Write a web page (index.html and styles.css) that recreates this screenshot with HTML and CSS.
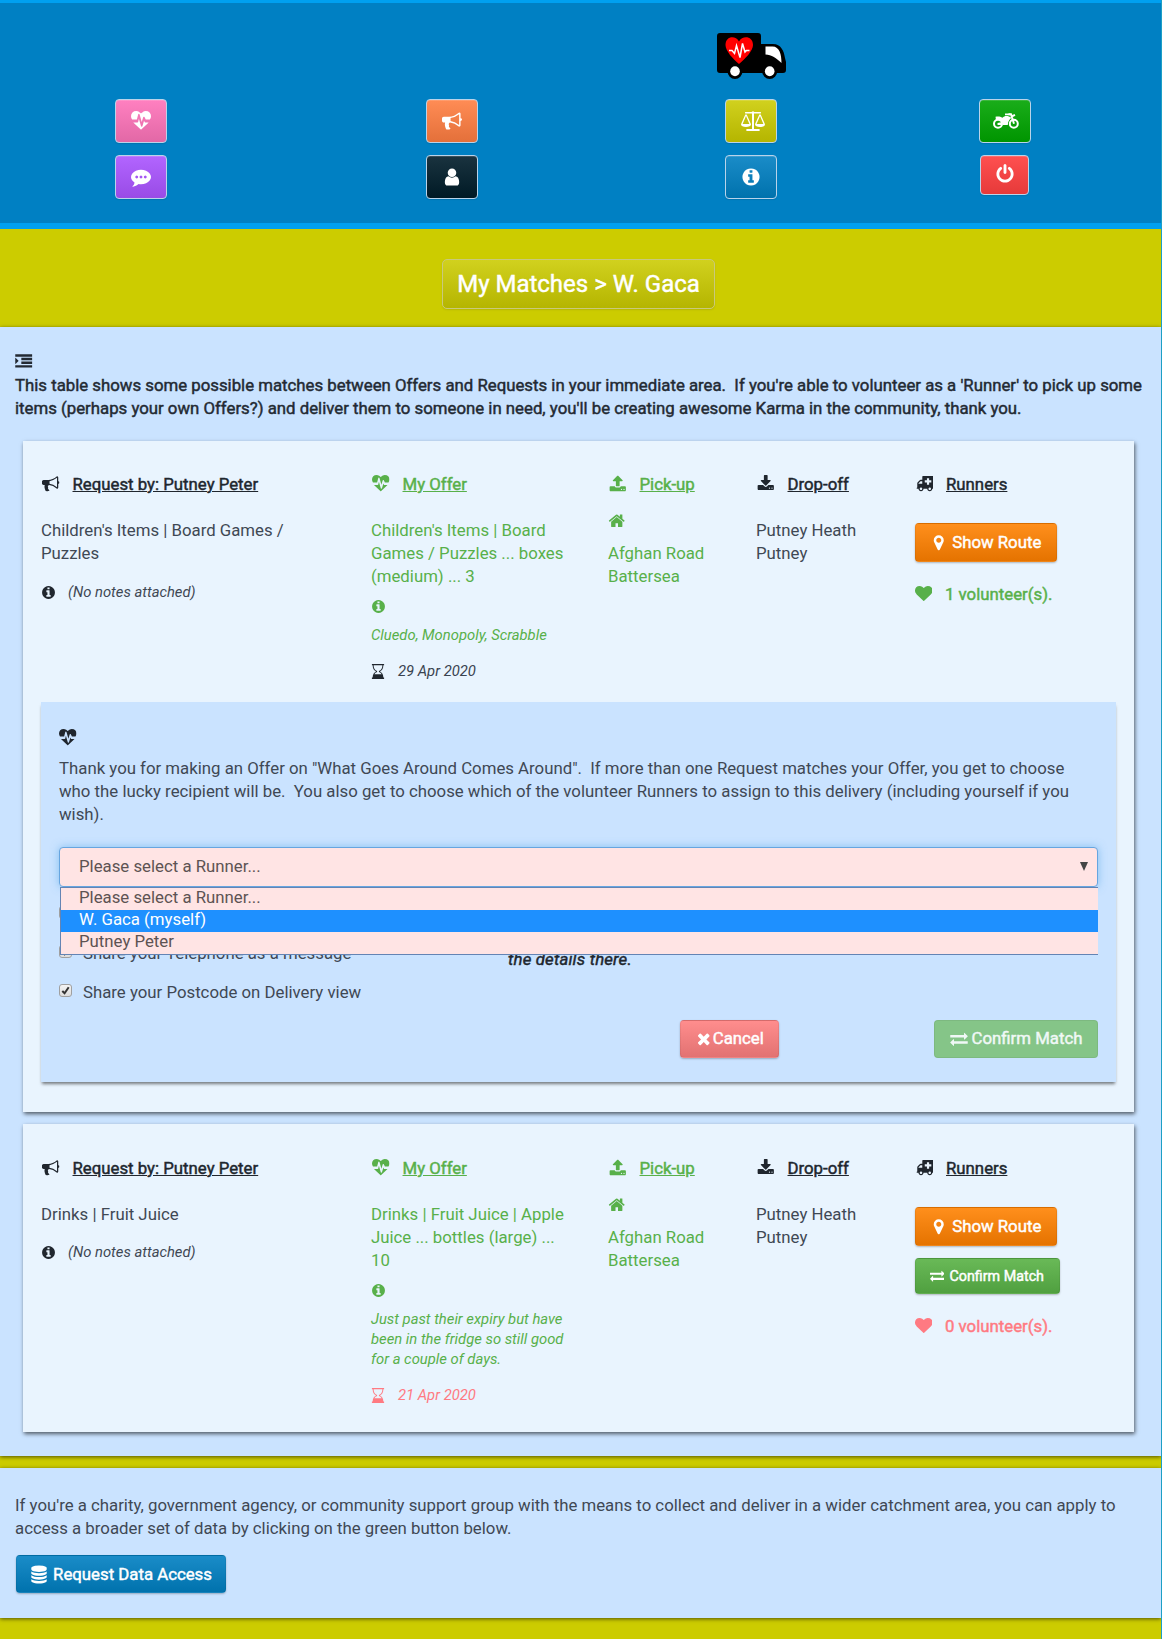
FILE: index.html
```html
<!DOCTYPE html>
<html lang="en">
<head>
<meta charset="utf-8">
<title>My Matches</title>
<link rel="stylesheet" href="styles.css">
</head>
<body>
<svg class="sprite" aria-hidden="true">
  <symbol id="heart" viewBox="0 0 1792 1792"><path d="M896 1664q-26 0-44-18l-624-602q-10-8-27.500-26t-55.500-65.500-68-97.500-53.500-121-23.500-138q0-220 127-344t351-124q62 0 126.500 21.500t120 58 95.500 68.500 76 68q36-36 76-68t95.500-68.500 120-58 126.500-21.500q224 0 351 124t127 344q0 221-229 450l-623 600q-18 18-44 18z"/></symbol>
  <symbol id="heartbeat" viewBox="0 0 1792 1792"><path d="M1280 1024h305q-5 6-10 10.500t-9 7.500l-3 4-623 600q-18 18-44 18t-44-18l-624-602q-5-2-21-20h369q22 0 39.500-13.500t22.500-34.500l70-281 190 667q6 20 23 33t39 13q21 0 38-13t23-33l146-485 56 112q18 35 57 35zm512-556q0 145-103 300h-369l-111-221q-8-17-25.500-27t-36.500-8q-45 5-56 46l-129 430-196-686q-6-20-23.500-33t-39.500-13-39 13.500-22 34.500l-116 464h-423q-103-155-103-300 0-220 127-344t351-124q62 0 126.500 21.500t120 58 95.500 68.500 76 68q36-36 76-68t95.500-68.500 120-58 126.500-21.500q224 0 351 124t127 344z"/></symbol>
  <symbol id="info" viewBox="0 0 1792 1792"><path d="M1152 1376v-160q0-14-9-23t-23-9h-96v-512q0-14-9-23t-23-9h-320q-14 0-23 9t-9 23v160q0 14 9 23t23 9h96v320h-96q-14 0-23 9t-9 23v160q0 14 9 23t23 9h448q14 0 23-9t9-23zm-128-896v-160q0-14-9-23t-23-9h-192q-14 0-23 9t-9 23v160q0 14 9 23t23 9h192q14 0 23-9t9-23zm640 416q0 209-103 385.500t-279.500 279.500-385.500 103-385.500-103-279.500-279.500-103-385.500 103-385.500 279.500-279.500 385.500-103 385.500 103 279.500 279.500 103 385.500z"/></symbol>
  <symbol id="bullhorn" viewBox="0 0 1792 1792"><path d="M1664 640q53 0 90.500 37.500t37.500 90.500-37.500 90.500-90.500 37.500v384q0 52-38 90t-90 38q-417-347-812-380-58 19-91 66t-31 100.500 40 92.500q-20 33-23 65.500t6 58 33.500 55 48 50 61.500 50.500q-29 58-111.500 83t-168.500 11.500-132-55.500q-7-23-29.500-87.500t-32-94.500-23-89-15-101 3.500-98.500 22-110.500h-122q-66 0-113-47t-47-113v-192q0-66 47-113t113-47h480q435 0 896-384 52 0 90 38t38 90v384zm-128 604v-954q-394 302-768 343v270q377 42 768 341z"/></symbol>
  <symbol id="marker" viewBox="0 0 1792 1792"><path d="M1152 640q0-106-75-181t-181-75-181 75-75 181 75 181 181 75 181-75 75-181zm256 0q0 109-33 179l-364 774q-16 33-47.500 52t-67.500 19-67.500-19-46.500-52l-365-774q-33-70-33-179 0-212 150-362t362-150 362 150 150 362z"/></symbol>
  <symbol id="exchange" viewBox="0 0 1792 1792"><path d="M1792 1184v192q0 13-9.500 22.500t-22.500 9.500h-1376v192q0 13-9.500 22.500t-22.500 9.500q-12 0-24-10l-319-320q-9-9-9-22 0-14 9-23l320-320q9-9 23-9 13 0 22.500 9.500t9.500 22.500v192h1376q13 0 22.500 9.500t9.500 22.500zm0-544q0 14-9 23l-320 320q-9 9-23 9-13 0-22.500-9.500t-9.500-22.500v-192h-1376q-13 0-22.500-9.500t-9.500-22.500v-192q0-13 9.500-22.500t22.500-9.500h1376v-192q0-14 9-23t23-9q12 0 24 10l319 319q9 9 9 23z"/></symbol>
  <symbol id="times" viewBox="0 0 1792 1792"><path d="M1490 1322q0 40-28 68l-136 136q-28 28-68 28t-68-28l-294-294-294 294q-28 28-68 28t-68-28l-136-136q-28-28-28-68t28-68l294-294-294-294q-28-28-28-68t28-68l136-136q28-28 68-28t68 28l294 294 294-294q28-28 68-28t68 28l136 136q28 28 28 68t-28 68l-294 294 294 294q28 28 28 68z"/></symbol>
  <symbol id="power" viewBox="0 0 1792 1792"><path d="M1664 896q0 156-61 298t-164 245-245 164-298 61-298-61-245-164-164-245-61-298q0-182 80.500-343t226.500-270q43-32 95.500-25t83.500 50q32 42 24.500 94.500t-49.500 84.500q-98 74-151.500 181t-53.500 228q0 104 40.500 198.500t109.500 163.500 163.500 109.500 198.500 40.500 198.500-40.500 163.500-109.500 109.500-163.500 40.500-198.500q0-121-53.500-228t-151.500-181q-42-32-49.500-84.500t24.500-94.500q31-43 84-50t95 25q146 109 226.500 270t80.500 343zm-640-768v640q0 52-38 90t-90 38-90-38-38-90v-640q0-52 38-90t90-38 90 38 38 90z"/></symbol>
  <symbol id="home" viewBox="0 0 1792 1792"><path d="M1472 992v480q0 26-19 45t-45 19h-384v-384h-256v384h-384q-26 0-45-19t-19-45v-480q0-1 .5-3t.5-3l575-474 575 474q1 2 1 6zm223-69l-62 74q-8 9-21 11h-3q-13 0-21-7l-692-577-692 577q-12 8-24 7-13-2-21-11l-62-74q-8-10-7-23.500t11-21.500l719-599q32-26 76-26t76 26l244 204v-195q0-14 9-23t23-9h192q14 0 23 9t9 23v408l219 182q10 8 11 21.500t-7 23.500z"/></symbol>
  <symbol id="download" viewBox="0 0 1792 1792"><path d="M1344 1344q0-26-19-45t-45-19-45 19-19 45 19 45 45 19 45-19 19-45zm256 0q0-26-19-45t-45-19-45 19-19 45 19 45 45 19 45-19 19-45zm128-224v320q0 40-28 68t-68 28h-1472q-40 0-68-28t-28-68v-320q0-40 28-68t68-28h465l135 136q58 56 136 56t136-56l136-136h464q40 0 68 28t28 68zm-325-569q17 41-14 70l-448 448q-18 19-45 19t-45-19l-448-448q-31-29-14-70 17-39 59-39h256v-448q0-26 19-45t45-19h256q26 0 45 19t19 45v448h256q42 0 59 39z"/></symbol>
  <symbol id="upload" viewBox="0 0 1792 1792"><path d="M1344 1472q0-26-19-45t-45-19-45 19-19 45 19 45 45 19 45-19 19-45zm256 0q0-26-19-45t-45-19-45 19-19 45 19 45 45 19 45-19 19-45zm128-224v320q0 40-28 68t-68 28h-1472q-40 0-68-28t-28-68v-320q0-40 28-68t68-28h427q21 56 70.500 92t110.500 36h256q61 0 110.500-36t70.500-92h427q40 0 68 28t28 68zm-325-648q-17 40-59 40h-256v448q0 26-19 45t-45 19h-256q-26 0-45-19t-19-45v-448h-256q-42 0-59-40-17-39 14-69l448-448q18-19 45-19t45 19l448 448q31 30 14 69z"/></symbol>
  <symbol id="indent" viewBox="0 0 1792 1792"><path d="M352 832q0 14-9 23l-288 288q-9 9-23 9-13 0-22.500-9.500t-9.500-22.500v-576q0-13 9.500-22.500t22.500-9.500q14 0 23 9l288 288q9 9 9 23zM0 1280h1792v256H0zM640 896h1152v256H640zM640 512h1152v256H640zM0 128h1792v256H0z"/></symbol>
  <symbol id="ambulance" viewBox="0 0 1792 1792"><path fill-rule="evenodd" d="M640 1408q0-52-38-90t-90-38-90 38-38 90 38 90 90 38 90-38 38-90zm-512-512h512v-256h-158q-13 0-22 9l-195 195q-9 9-9 22v30zm1408 512q0-52-38-90t-90-38-90 38-38 90 38 90 90 38 90-38 38-90zm256-1216v1152q0 15-4 26.500t-13.500 18.500-16.500 11.500-23.500 6-22.500 2-25.500 0-22.500-.5q0 106-75 181t-181 75-181-75-75-181h-384q0 106-75 181t-181 75-181-75-75-181h-64q-3 0-22.500.5t-25.500 0-22.500-2-23.500-6-16.500-11.500-13.500-18.500-4-26.500q0-26 19-45t45-19v-416q0-40 14-76t36-58l198-198q19-19 50.500-32t58.500-13h160v-320q0-26 19-45t45-19h1152q26 0 45 19t19 45zM1120 320v224H896v224h224v224h224V768h224V544h-224V320z"/></symbol>
  <symbol id="database" viewBox="0 0 1792 1792"><path d="M896 768q237 0 443-43t325-127v170q0 69-103 128t-280 93.500-385 34.500-385-34.500-280-93.500-103-128v-170q119 84 325 127t443 43zm0 768q237 0 443-43t325-127v170q0 69-103 128t-280 93.500-385 34.500-385-34.500-280-93.500-103-128v-170q119 84 325 127t443 43zm0-384q237 0 443-43t325-127v170q0 69-103 128t-280 93.500-385 34.500-385-34.500-280-93.500-103-128v-170q119 84 325 127t443 43zm0-1152q208 0 385 34.500t280 93.500 103 128v128q0 69-103 128t-280 93.500-385 34.500-385-34.500-280-93.500-103-128v-128q0-69 103-128t280-93.500 385-34.500z"/></symbol>
  <symbol id="user" viewBox="0 0 1792 1792"><path d="M1536 1399q0 109-62.500 187t-150.500 78h-854q-88 0-150.500-78t-62.500-187q0-85 8.500-160.500t31.500-152 58.500-131 94-89 134.500-34.500q131 128 313 128t313-128q76 0 134.500 34.500t94 89 58.500 131 31.500 152 8.500 160.500zm-256-887q0 159-112.500 271.500t-271.500 112.500-271.500-112.500-112.500-271.500 112.500-271.500 271.500-112.500 271.500 112.500 112.500 271.500z"/></symbol>
  <symbol id="comment" viewBox="0 0 1792 1792"><path d="M640 896q0-53-37.500-90.500t-90.500-37.500-90.500 37.500-37.500 90.500 37.500 90.500 90.500 37.500 90.500-37.500 37.500-90.500zm384 0q0-53-37.500-90.500t-90.500-37.500-90.500 37.500-37.500 90.500 37.500 90.500 90.500 37.500 90.500-37.500 37.500-90.500zm384 0q0-53-37.500-90.500t-90.500-37.500-90.500 37.500-37.500 90.500 37.500 90.500 90.500 37.500 90.500-37.500 37.500-90.500zm384 0q0 174-120 321.500t-326 233-450 85.500q-110 0-211-18-173 173-435 229-52 10-86 13-12 1-22-6t-13-18q-4-15 20-37 5-5 23.500-21.500t25.500-23.500 23.500-25.500 24-31.500 20.500-37 20-48 14.500-57.500 12.500-72.500q-146-90-229.500-216.500t-83.500-269.500q0-174 120-321.500t326-233 450-85.500 450 85.500 326 233 120 321.500z"/></symbol>
  <symbol id="hourglass" viewBox="0 0 14 16"><path fill-rule="evenodd" d="M.5 0h13v1.200h-.8c0 3.400-1.400 5.600-3.600 6.800 2.200 1.200 3.600 3.400 3.600 6.400h.8V16H.5v-1.600h.8C1.300 11.400 2.700 9.200 4.900 8 2.700 6.800 1.300 4.600 1.300 1.200H.5zM2.300 1.200C2.400 4.600 3.700 6.600 6 7.400v1.200c-1.300.5-2.200 1.200-2.900 2.200h7.800c-.7-1-1.600-1.700-2.900-2.200V7.400c2.300-.8 3.600-2.800 3.700-6.200z"/></symbol>
  <symbol id="scale" viewBox="0 0 24 20"><path fill-rule="evenodd" d="M11 2.600V18H6c-1 0-1 2 0 2h12c1 0 1-2 0-2h-5V2.600h6.500c.8 0 .8-1.600 0-1.600h-6.200a1.500 1.500 0 0 0-2.600 0H4.500c-.8 0-.8 1.600 0 1.600zM4.300 3.500h1.400L10 13.200C10 15 7.800 16 5 16s-5-1-5-2.800zM5 5L1.600 13h6.800zm13.300-1.500h1.400L24 13.200c0 1.800-2.200 2.800-5 2.800s-5-1-5-2.800zM19 5l-3.400 8h6.800z"/></symbol>
  <symbol id="motorcycle" viewBox="0 0 26 16"><g fill="none" stroke="currentColor" stroke-width="2"><circle cx="5" cy="10.700" r="4"/><circle cx="20.800" cy="10.700" r="4"/><path d="M15.500 1.200H18l3 9.500M18.500 3.500l3.500-1.600"/></g><path d="M2.500 3.800c3-.7 5 0 7 1 1.500-1.800 4-2.200 6.500-1.300l2.500 1.200c-2.500 2-3.600 4-3.700 7.300H10c0-3-2-5-5-5.200l-2 .4zM12 .4h5.500v1.800H12zM4.500 10l5-1v3h-5z"/></symbol>
</svg>

<header class="topbar">
  <svg class="logo" viewBox="0 0 69 46">
    <path d="M3 0h38q3 0 3 3v8h12c8 0 11 7 12 14l1 4v8q0 3-3 3H3q-3 0-3-3V3q0-3 3-3z"/>
    <circle cx="18" cy="38.500" r="7.500"/><circle cx="52.700" cy="38.500" r="7.500"/>
    <path fill="#fff" d="M48.500 13.600h7c7 0 9 8 9 16.400-5-5-10-8-16-8.500z"/>
    <ellipse cx="18" cy="38.300" rx="4.800" ry="5" fill="#fff"/><ellipse cx="52.700" cy="38.300" rx="4.800" ry="5" fill="#fff"/>
    <path fill="#f00" d="M22 31C16 26 8.500 18 8.500 12c0-9 10-10 13.500-3.500C25.500 2 36 3 36 12c0 6-8 14-14 19z"/>
    <path fill="none" stroke="#fff" stroke-width="1.500" d="M12 17.500h3l2.500 3 2-8 3.500 12 2.500-14 2.500 8.500 1.500-1.500h3"/>
  </svg>
  <a class="nav c1 r2 pink"><svg><use href="#heartbeat"/></svg></a>
  <a class="nav c2 r2 orange"><svg><use href="#bullhorn"/></svg></a>
  <a class="nav c3 r2 olive"><svg class="wide"><use href="#scale"/></svg></a>
  <a class="nav c4 r2 green"><svg class="bike"><use href="#motorcycle"/></svg></a>
  <a class="nav c1 r3 purple"><svg><use href="#comment"/></svg></a>
  <a class="nav c2 r3 black"><svg><use href="#user"/></svg></a>
  <a class="nav c3 r3 blue"><svg><use href="#info"/></svg></a>
  <a class="nav c4 r3 red"><svg><use href="#power"/></svg></a>
</header>

<div class="titlebar"><h1 class="title olive">My Matches &gt; W. Gaca</h1></div>

<main class="section">
  <div class="intro">
    <svg class="icon"><use href="#indent"/></svg>
    <p class="strong">This table shows some possible matches between Offers and Requests in your immediate area.&nbsp; If you're able to volunteer as a 'Runner' to pick up some<br>items (perhaps your own Offers?) and deliver them to someone in need, you'll be creating awesome Karma in the community, thank you.</p>
  </div>

  <article class="card first">
    <div class="cols">
      <div>
        <h2><svg class="icon"><use href="#bullhorn"/></svg><u>Request by: Putney Peter</u></h2>
        <p>Children's Items | Board Games /<br>Puzzles</p>
        <p class="note"><svg><use href="#info"/></svg><i>(No notes attached)</i></p>
      </div>
      <div class="mine">
        <h2><svg class="icon"><use href="#heartbeat"/></svg><u>My Offer</u></h2>
        <p>Children's Items | Board<br>Games / Puzzles ... boxes<br>(medium) ... 3</p>
        <p class="info"><svg><use href="#info"/></svg></p>
        <p class="small">Cluedo, Monopoly, Scrabble</p>
        <p class="note date dark"><svg class="glass"><use href="#hourglass"/></svg><i>29 Apr 2020</i></p>
      </div>
      <div class="mine">
        <h2><svg class="icon"><use href="#upload"/></svg><u>Pick-up</u></h2>
        <div class="home"><svg class="icon"><use href="#home"/></svg></div>
        <p>Afghan Road<br>Battersea</p>
      </div>
      <div>
        <h2><svg class="icon"><use href="#download"/></svg><u>Drop-off</u></h2>
        <p>Putney Heath<br>Putney</p>
      </div>
      <div>
        <h2><svg class="icon"><use href="#ambulance"/></svg><u>Runners</u></h2>
        <a class="btn route"><svg class="icon"><use href="#marker"/></svg>Show Route</a>
        <p class="volunteers mine"><svg class="icon"><use href="#heart"/></svg>1 volunteer(s).</p>
      </div>
    </div>

    <section class="panel">
      <svg class="icon"><use href="#heartbeat"/></svg>
      <p class="thanks">Thank you for making an Offer on "What Goes Around Comes Around".&nbsp; If more than one Request matches your Offer, you get to choose<br>who the lucky recipient will be.&nbsp; You also get to choose which of the volunteer Runners to assign to this delivery (including yourself if you<br>wish).</p>
      <div class="picker">
        <div class="select"><span>Please select a Runner...</span><svg class="caret" viewBox="0 0 8 9"><path d="M0 0h8L4 9z"/></svg></div>
        <ul class="menu">
          <li>Please select a Runner...</li>
          <li class="active">W. Gaca (myself)</li>
          <li>Putney Peter</li>
        </ul>
      </div>
      <div class="sharing">
        <div class="checks">
          <div class="check"><span class="box"></span></div>
          <div class="check"><span class="box"><svg viewBox="0 0 12 12"><path d="M2.500 6.500L5 9l4.500-6.500"/></svg></span>Share your Telephone as a message</div>
          <div class="check"><span class="box"><svg viewBox="0 0 12 12"><path d="M2.500 6.500L5 9l4.500-6.500"/></svg></span>Share your Postcode on Delivery view</div>
        </div>
        <p class="hint strong">the details there.</p>
      </div>
      <div class="actions">
        <a class="btn cancel"><svg class="icon"><use href="#times"/></svg>Cancel</a>
        <a class="btn confirm disabled"><svg class="icon"><use href="#exchange"/></svg>Confirm Match</a>
      </div>
    </section>
  </article>

  <article class="card second">
    <div class="cols">
      <div>
        <h2><svg class="icon"><use href="#bullhorn"/></svg><u>Request by: Putney Peter</u></h2>
        <p>Drinks | Fruit Juice</p>
        <p class="note"><svg><use href="#info"/></svg><i>(No notes attached)</i></p>
      </div>
      <div class="mine">
        <h2><svg class="icon"><use href="#heartbeat"/></svg><u>My Offer</u></h2>
        <p>Drinks | Fruit Juice | Apple<br>Juice ... bottles (large) ...<br>10</p>
        <p class="info"><svg><use href="#info"/></svg></p>
        <p class="small">Just past their expiry but have<br>been in the fridge so still good<br>for a couple of days.</p>
        <p class="note date expired"><svg class="glass"><use href="#hourglass"/></svg><i>21 Apr 2020</i></p>
      </div>
      <div class="mine">
        <h2><svg class="icon"><use href="#upload"/></svg><u>Pick-up</u></h2>
        <div class="home"><svg class="icon"><use href="#home"/></svg></div>
        <p>Afghan Road<br>Battersea</p>
      </div>
      <div>
        <h2><svg class="icon"><use href="#download"/></svg><u>Drop-off</u></h2>
        <p>Putney Heath<br>Putney</p>
      </div>
      <div>
        <h2><svg class="icon"><use href="#ambulance"/></svg><u>Runners</u></h2>
        <a class="btn route"><svg class="icon"><use href="#marker"/></svg>Show Route</a>
        <a class="btn confirm little"><svg class="icon"><use href="#exchange"/></svg>Confirm Match</a>
        <p class="volunteers expired"><svg class="icon"><use href="#heart"/></svg>0 volunteer(s).</p>
      </div>
    </div>
  </article>
</main>

<section class="section access">
  <p>If you're a charity, government agency, or community support group with the means to collect and deliver in a wider catchment area, you can apply to<br>access a broader set of data by clicking on the green button below.</p>
  <a class="btn data"><svg class="icon"><use href="#database"/></svg>Request Data Access</a>
</section>
</body>
</html>
```

FILE: styles.css
```css
* { box-sizing: border-box; }
html { background: #cc0; }
body {
  margin: 0;
  height: 1639px;
  overflow: hidden;
  background: #cc0;
  border-right: 1px solid #1d9fc6;
  font: 16.8px/23px Roboto, sans-serif;
  color: #3f4854;
  white-space: nowrap;
}
h1, h2, p, ul { margin: 0; padding: 0; font-weight: 400; }
svg { display: block; flex: none; fill: currentColor; }
.sprite { position: absolute; width: 0; height: 0; }
.icon { width: 17.5px; height: 17.5px; }
.strong, h1, h2, .volunteers, .btn { -webkit-text-stroke: .45px currentColor; }

.topbar {
  display: grid;
  grid-template-columns: 282px 340px 258px 249px;
  grid-template-rows: 63px 56px 56px;
  justify-items: center;
  align-items: start;
  height: 229px;
  padding-top: 33px;
  background: #0080c3;
  border-top: 3px solid #00a0f0;
  border-bottom: 6px solid #00a0f0;
  color: #fff;
}
.logo { grid-column: 3; grid-row: 1; width: 69px; height: 46px; fill: #000; margin-top: -3px; }
.nav {
  display: flex;
  align-items: center;
  justify-content: center;
  width: 52px;
  height: 44px;
  border: 1px solid #b9d3ea;
  border-radius: 4px;
  box-shadow: inset 0 1px 0 rgba(255,255,255,.15), 0 1px 1px rgba(0,0,0,.1);
}
.nav svg { width: 20px; height: 20px; }
.nav svg.wide { width: 24px; margin-left: 3px; }
.nav svg.bike { width: 26px; height: 16px; margin: -1px 0 0 3px; }
.c1 { grid-column: 1; }
.c2 { grid-column: 2; }
.c3 { grid-column: 3; }
.c4 { grid-column: 4; }
.r2 { grid-row: 2; }
.r3 { grid-row: 3; }
.pink { background: linear-gradient(#ff80c0, #e268a6); }
.orange { background: linear-gradient(#ff8c55, #e4703a); }
.olive { background: linear-gradient(#d1d11e, #b5b500); }
.green { background: linear-gradient(#1aad1a, #009500); }
.purple { background: linear-gradient(#b265ff, #994be6); }
.black { background: linear-gradient(#1a333f, #001a26); }
.blue { background: linear-gradient(#1a8cc8, #0072ad); }
.red { width: 49px; height: 40px; background: linear-gradient(#ff5050, #e63a3a); }
.red svg { margin-top: -2px; }

.titlebar { display: flex; justify-content: center; height: 98px; padding: 30px 4px 0 0; }
.title {
  width: 273px;
  height: 50px;
  border: 1px solid #c9c97c;
  border-radius: 5px;
  color: #fff;
  font-size: 24px;
  line-height: 48px;
  text-align: center;
  box-shadow: 0 1px 2px rgba(0,0,0,.1);
}

.section { background: #cae3ff; box-shadow: 0 1px 4px rgba(0,0,0,.6); }
main.section { height: 1129px; padding: 26px 26px 0 15px; }
.intro { height: 88px; color: #232a33; }
.intro .icon { margin-bottom: 4px; height: 17px; }

.card {
  margin-left: 8px;
  width: 1111px;
  padding: 32px 18px 0;
  background: #e9f4fe;
  box-shadow: 1px 2px 4px rgba(0,0,0,.6);
}
.first { height: 671px; }
.second { height: 308px; margin-top: 12px; padding-top: 33px; }
.cols { display: grid; grid-template-columns: 330px 237px 148px 158.500px 1fr; }
.first .cols { height: 229px; }
h2 { display: flex; font-size: 16.8px; line-height: 23px; color: #20262e; margin-bottom: 23px; }
h2 .icon { margin: 2px 13px 0 1px; }
.mine, .mine h2 { color: #58b04a; }
.dark { color: #3a4350; }
.expired { color: #ff7a82; }
.note { display: flex; align-items: center; height: 20px; margin-top: 17px; font-size: 14.800px; }
.second .note { margin-top: 16px; }
.note svg { width: 15px; height: 15px; margin: 0 12px 0 0; color: #20262e; }
.note .glass { width: 14px; height: 15px; margin-right: 13px; }
.note.expired svg { color: #ff7a82; }
.info { height: 37px; padding-top: 11px; }
.info svg { width: 15px; height: 15px; }
.small { font-size: 14.800px; line-height: 20px; font-style: italic; }
.first .date, .second .date { margin-top: 16px; }
.home { height: 46px; margin-top: -23px; padding-top: 16px; }

.btn {
  display: flex;
  align-items: center;
  justify-content: center;
  border: 1px solid rgba(0,0,0,.06);
  border-radius: 4px;
  color: #fff;
  box-shadow: 0 1px 2px rgba(0,0,0,.25);
}
h2:has(+ .route) { margin-bottom: 27px; }
.route { width: 142px; height: 39px; background: linear-gradient(#ff8f1c, #e57300); }
.route .icon { margin-right: 5px; }
.volunteers { display: flex; margin-top: 21px; }
.volunteers .icon { margin: 1px 13px 0 0; height: 19px; }
.confirm { background: linear-gradient(#69b957, #50a040); }
.little { width: 145px; height: 36px; margin-top: 12px; font-size: 14.300px; }
.little .icon { width: 14.500px; margin-right: 5px; }
.little + .volunteers { margin-top: 21px; }

.panel {
  height: 380px;
  padding: 26px 18px 0;
  background: #cae3ff;
  box-shadow: 0 3px 3px -1px rgba(0,0,0,.5);
}
.panel > .icon { color: #20262e; margin-top: 1px; }
.thanks { margin: 10px 0 21px; }
.picker { position: relative; height: 40px; }
.select {
  display: flex;
  align-items: center;
  justify-content: space-between;
  height: 40px;
  padding: 0 9px 0 19px;
  background: #ffe4e4;
  border: 1px solid #66a5e0;
  border-radius: 4px;
  box-shadow: 0 0 8px rgba(102,175,233,.7);
  color: #5d5353;
}
.caret { width: 8px; height: 9px; fill: #444; }
.menu {
  position: absolute;
  z-index: 2;
  top: 40px;
  left: 1px;
  right: 0;
  list-style: none;
  background: #ffe4e4;
  border: 1px solid #6484b4;
  border-right: 0;
  color: #5d5353;
}
.menu li { height: 22px; line-height: 19px; padding-left: 18px; }
.menu .active { background: #1e90ff; color: #fff; }
.sharing { display: flex; height: 133px; padding-top: 16px; }
.checks { width: 449px; }
.check { display: flex; height: 39px; line-height: 23px; }
.check .box {
  width: 13px;
  height: 13px;
  margin: 3px 11px 0 0;
  border: 1px solid #a0a0a0;
  border-radius: 3px;
  background: linear-gradient(#f4f4f4, #ddd);
}
.box path { fill: none; stroke: #333; stroke-width: 2.200; }
.hint { padding-top: 45px; font-style: italic; letter-spacing: .18px; color: #20262e; }
.actions { display: flex; justify-content: space-between; padding-left: 621px; }
.cancel { width: 99px; height: 38px; background: linear-gradient(#ff8d8d, #e27272); }
.disabled { width: 164px; height: 38px; background: #85c588; color: #f0f8f6; box-shadow: none; }
.disabled .icon { width: 18px; margin-right: 4px; }

.access { height: 150px; margin-top: 12px; padding: 26px 15px 0; }
.data { width: 210px; height: 38px; margin: 15px 0 0 1px; background: linear-gradient(#1a8cc8, #0072ad); }
.data .icon { margin-right: 5px; width: 18px; height: 19px; }
```
